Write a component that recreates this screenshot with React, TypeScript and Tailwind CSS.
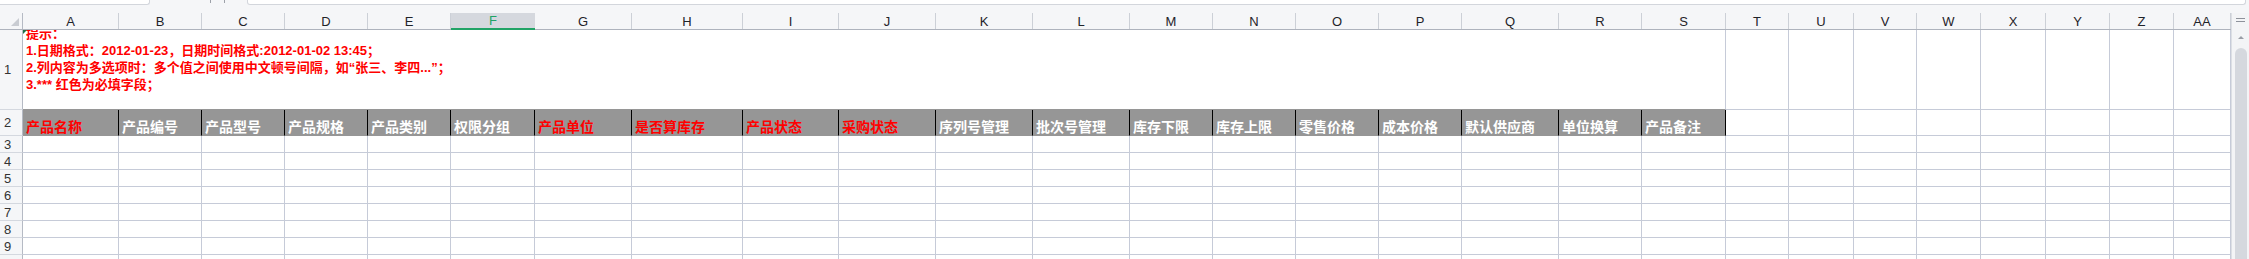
const GRID =
  "grid grid-cols-[23px_96px_83px_83px_83px_83px_84px_97px_111px_96px_97px_97px_97px_83px_83px_83px_83px_97px_83px_84px_63px_65px_63px_64px_65px_64px_64px_57px]";

const LETTERS = [
  "A", "B", "C", "D", "E", "F", "G", "H", "I", "J", "K", "L", "M", "N",
  "O", "P", "Q", "R", "S", "T", "U", "V", "W", "X", "Y", "Z", "AA",
];

const HEADERS: { label: string; required?: boolean }[] = [
  { label: "产品名称", required: true },
  { label: "产品编号" },
  { label: "产品型号" },
  { label: "产品规格" },
  { label: "产品类别" },
  { label: "权限分组" },
  { label: "产品单位", required: true },
  { label: "是否算库存", required: true },
  { label: "产品状态", required: true },
  { label: "采购状态", required: true },
  { label: "序列号管理" },
  { label: "批次号管理" },
  { label: "库存下限" },
  { label: "库存上限" },
  { label: "零售价格" },
  { label: "成本价格" },
  { label: "默认供应商" },
  { label: "单位换算" },
  { label: "产品备注" },
];

// columns T..AA, outside the template area
const EXTRA = LETTERS.slice(HEADERS.length);

function FormulaBarEdge() {
  return (
    <div className="h-[13px] shrink-0 flex">
      <div className="w-[150px] h-[5px] bg-white border-r border-b border-[#d3d6dc] rounded-br-[3px]" />
      <div className="w-[97px] h-[5px] flex items-start gap-[13px] pl-[60px]">
        <div className="w-[1px] h-[3px] bg-[#9da1a9]" />
        <div className="w-[1px] h-[3px] bg-[#9da1a9]" />
      </div>
      <div className="w-[1999px] h-[5px] bg-white border-x border-b border-[#d3d6dc] rounded-b-[3px]" />
    </div>
  );
}

function ColumnHeader() {
  return (
    <div className={`${GRID} h-[17px] shrink-0 border-b border-[#aeb3bd]`}>
      <div className="relative border-r border-[#b5bac4]">
        <div className="absolute left-[11px] top-[5px] w-0 h-0 border-l-[8px] border-l-transparent border-b-[8px] border-b-[#c9ccd2]" />
      </div>
      {LETTERS.map((l) =>
        l === "F" ? (
          <div
            key={l}
            className="flex items-center justify-center bg-[#d5d8de] border-b-2 border-[#21a366] -mb-[1px] text-[13px] leading-none text-[#21a366]"
          >
            {l}
          </div>
        ) : (
          <div
            key={l}
            className="flex items-center justify-center border-r border-[#ccd0d7] text-[13px] leading-none text-[#1f2329]"
          >
            {l}
          </div>
        )
      )}
    </div>
  );
}

function RowNumber({ n }: { n: number }) {
  return (
    <div className="flex items-center pl-[4px] bg-[#f5f6f8] border-r border-b border-r-[#b5bac4] border-b-[#d4d8df] text-[13px] leading-none text-[#333]">
      {n}
    </div>
  );
}

function NoticeRow() {
  return (
    <div className={`${GRID} h-[80px] shrink-0`}>
      <RowNumber n={1} />
      <div className="col-span-19 relative overflow-hidden bg-white border-r border-b border-r-[#c6cbd8] border-b-[#969696]">
        <div className="absolute left-0 top-0 w-0 h-0 border-t-[4px] border-t-[#1e7145] border-r-[4px] border-r-transparent" />
        <div className="-mt-[5px] pl-[3px] flex flex-col text-[13px] leading-[17px] font-bold text-[#ff0000] whitespace-nowrap">
          <span>提示：</span>
          <span>1.日期格式：2012-01-23，日期时间格式:2012-01-02 13:45；</span>
          <span>2.列内容为多选项时：多个值之间使用中文顿号间隔，如“张三、李四...”；</span>
          <span>3.*** 红色为必填字段；</span>
        </div>
      </div>
      {EXTRA.map((l) => (
        <div key={l} className="bg-white border-r border-b border-[#c6cbd8]" />
      ))}
    </div>
  );
}

function TitleRow() {
  return (
    <div className={`${GRID} h-[26px] shrink-0`}>
      <RowNumber n={2} />
      {HEADERS.map((h) => (
        <div
          key={h.label}
          className={`flex items-end pl-[3px] bg-[#969696] border-r border-b border-r-black border-b-[#969696] text-[14px] leading-[16px] font-bold whitespace-nowrap ${
            h.required ? "text-[#ff0000]" : "text-white"
          }`}
        >
          {h.label}
        </div>
      ))}
      {EXTRA.map((l) => (
        <div key={l} className="bg-white border-r border-b border-[#c6cbd8]" />
      ))}
    </div>
  );
}

function EmptyRow({ n }: { n: number }) {
  return (
    <div className={`${GRID} h-[17px] shrink-0`}>
      <RowNumber n={n} />
      {LETTERS.map((l) => (
        <div key={l} className="bg-white border-r border-b border-[#c6cbd8]" />
      ))}
    </div>
  );
}

function Sheet() {
  return (
    <div className="w-[2231px] flex flex-col overflow-hidden">
      <ColumnHeader />
      <NoticeRow />
      <TitleRow />
      {[3, 4, 5, 6, 7, 8, 9, 10].map((n) => (
        <EmptyRow key={n} n={n} />
      ))}
    </div>
  );
}

function Scrollbar() {
  return (
    <div className="w-[18px] flex flex-col border-l border-[#dcdfe4] bg-[#f3f4f6]">
      <div className="h-[17px] shrink-0 flex flex-col items-center pt-[5px] gap-[2px]">
        <div className="w-[9px] h-[1px] bg-[#8e929b]" />
        <div className="w-[9px] h-[1px] bg-[#8e929b]" />
      </div>
      <div className="flex-1 flex flex-col items-center pl-[1px] pt-[6px]">
        <div className="w-0 h-0 border-x-[3px] border-x-transparent border-b-[3px] border-b-[#9a9ea6]" />
        <div className="mt-[9px] w-[12px] flex-1 rounded-t-[6px] bg-[#d5d8de]" />
      </div>
    </div>
  );
}

export default function App() {
  return (
    <div className="w-[2249px] h-[259px] overflow-hidden bg-[#f5f6f8] flex flex-col font-['Liberation_Sans','Noto_Sans_CJK_SC',sans-serif]">
      <FormulaBarEdge />
      <div className="flex flex-1 min-h-0">
        <Sheet />
        <Scrollbar />
      </div>
    </div>
  );
}
